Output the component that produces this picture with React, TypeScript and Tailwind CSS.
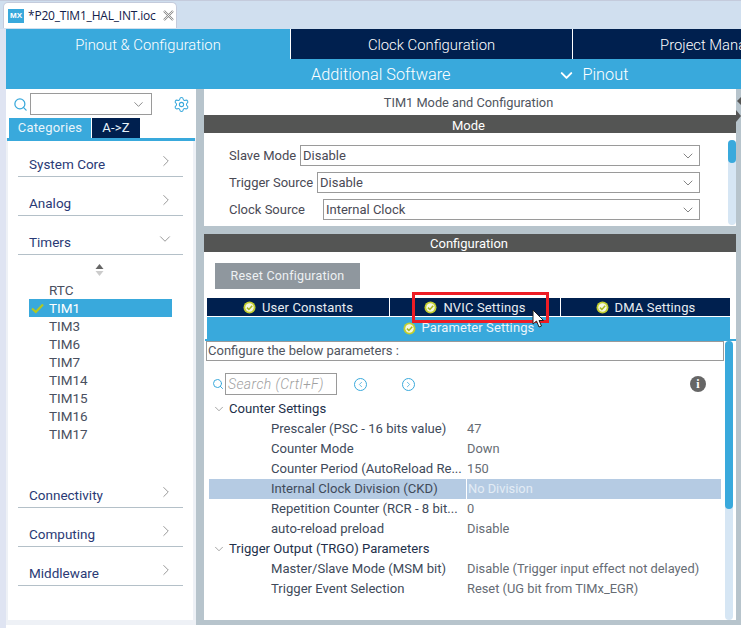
import { ChevronDown, ChevronLeft, ChevronRight, Search, Settings } from "lucide-react";

const timers = ["RTC", "TIM1", "TIM3", "TIM6", "TIM7", "TIM14", "TIM15", "TIM16", "TIM17"];

const counterRows = [
  { label: "Prescaler (PSC - 16 bits value)", value: "47" },
  { label: "Counter Mode", value: "Down" },
  { label: "Counter Period (AutoReload Re...", value: "150" },
  { label: "Internal Clock Division (CKD)", value: "No Division", selected: true },
  { label: "Repetition Counter (RCR - 8 bit...", value: "0" },
  { label: "auto-reload preload", value: "Disable" },
];

const triggerRows = [
  { label: "Master/Slave Mode (MSM bit)", value: "Disable (Trigger input effect not delayed)" },
  { label: "Trigger Event Selection", value: "Reset (UG bit from TIMx_EGR)" },
];

function OkDot() {
  return (
    <svg width="13" height="13" viewBox="0 0 13 13" className="shrink-0">
      <circle cx="6.5" cy="6.5" r="6" fill="#c3cf2f" />
      <circle cx="6.5" cy="6.5" r="4.2" fill="#f4f7e2" />
      <path d="M4 6.6 L5.9 8.5 L9.2 4.8" fill="none" stroke="#a8b81c" strokeWidth="1.5" />
    </svg>
  );
}

function Category({ name, open, className }: { name: string; open?: boolean; className?: string }) {
  return (
    <div className={`mx-[10px] h-[25px] flex items-start justify-between border-b border-[#b4c0c8] pl-[11px] pr-[8px] ${className ?? ""}`}>
      <span className="text-[13.5px] leading-[18px] text-[#2a3a75] mt-[3px]">{name}</span>
      {open ? (
        <ChevronDown size={18} strokeWidth={1} className="text-[#777] mr-[1px]" />
      ) : (
        <ChevronRight size={18} strokeWidth={1} className="text-[#777]" />
      )}
    </div>
  );
}

function ModeRow({ label, value, left }: { label: string; value: string; left: string }) {
  return (
    <div className="flex items-center h-[21px] mb-[6px] pl-[25px]">
      <span className="text-[13px] text-[#4a4a55] whitespace-nowrap pt-px">{label}</span>
      <div className={`absolute ${left} right-[36px] h-[21px] border border-[#9a9a9a] bg-white flex items-center justify-between pl-[2px] pr-[3px]`}>
        <span className="text-[13px] text-[#4a4a55] pt-px">{value}</span>
        <ChevronDown size={16} strokeWidth={1.2} className="text-[#666]" />
      </div>
    </div>
  );
}

function ParamTab({ label, className }: { label: string; className?: string }) {
  return (
    <div className={`h-[18px] bg-[#00204f] flex items-center justify-center gap-[6px] text-[13px] text-[#e8edf2] tracking-[0.15px] ${className ?? ""}`}>
      <OkDot />
      <span className="pt-px">{label}</span>
    </div>
  );
}

function TreeRow({ label, value, selected }: { label: string; value: string; selected?: boolean }) {
  return (
    <div className={`flex h-[20px] items-center ml-[5px] mr-[3px] ${selected ? "bg-[#b5cbe3]" : ""}`}>
      <span className="w-[257px] shrink-0 pl-[62px] text-[13.1px] text-[#404a5a] whitespace-nowrap">{label}</span>
      <span className={`h-full flex items-center pl-[1px] text-[12.85px] whitespace-nowrap ${selected ? "border-l border-white text-[#e3ecf5]" : "text-[#666c74]"}`}>{value}</span>
    </div>
  );
}

function TreeHead({ label }: { label: string }) {
  return (
    <div className="flex h-[20px] items-center pl-[8px]">
      <ChevronDown size={14} strokeWidth={1} className="text-[#666] mr-[3px]" />
      <span className="text-[13.1px] text-[#22304a] whitespace-nowrap">{label}</span>
    </div>
  );
}

export default function App() {
  return (
    <div className="relative w-[741px] h-[628px] overflow-hidden bg-[#dfe4f2] flex flex-col font-['Roboto',sans-serif]">
      {/* editor tab strip */}
      <div className="h-[29px] shrink-0 bg-[#d0dfef] border-t border-[#c4cbdc] pl-[3px] flex items-start">
        <div className="w-[174px] h-[26px] mt-px bg-white rounded-t-[5px] border border-b-0 border-[#c4cbdc] flex items-center pl-[4px]">
          <div className="w-[16px] h-[14px] bg-[#39a9dc] text-white text-[8px] font-bold flex items-center justify-center font-['Liberation_Sans',sans-serif]">MX</div>
          <span className="ml-[4px] text-[12px] tracking-[-0.2px] text-[#12204a] font-['Open_Sans',sans-serif] whitespace-nowrap">*P20_TIM1_HAL_INT.ioc</span>
          <svg width="11" height="11" viewBox="0 0 11 11" className="ml-[7px]">
            <path d="M1 1 L10 10 M10 1 L1 10" stroke="#8a8a8a" strokeWidth="2.2" />
            <path d="M1 1 L10 10 M10 1 L1 10" stroke="#fff" strokeWidth="0.8" />
          </svg>
        </div>
      </div>

      <div className="flex-1 ml-[6px] flex flex-col min-h-0">
        {/* perspective tabs */}
        <div className="h-[30px] shrink-0 flex bg-[#39a9dc] text-[14.8px] font-light text-white whitespace-nowrap">
          <div className="w-[284px] shrink-0 pt-[2px] flex items-center justify-center">Pinout &amp; Configuration</div>
          <div className="w-[282px] shrink-0 pt-[2px] bg-[#00204f] border-l border-white flex items-center justify-center">Clock Configuration</div>
          <div className="w-[282px] shrink-0 pt-[2px] bg-[#00204f] border-l border-white flex items-center justify-center">Project Manager</div>
        </div>
        <div className="h-[30px] shrink-0 pt-[2px] bg-[#39a9dc] flex items-center text-[16.3px] font-light text-white whitespace-nowrap">
          <span className="ml-[305px]">Additional Software</span>
          <ChevronDown size={19} strokeWidth={2.5} className="ml-[107px]" />
          <span className="ml-[6px]">Pinout</span>
        </div>

        <div className="flex-1 flex min-h-0">
          {/* left column */}
          <div className="w-[190px] shrink-0 flex flex-col bg-[#eef1f6]">
            <div className="h-[29px] shrink-0 flex items-center bg-white pl-[7px] pt-[1px]">
              <Search size={15} strokeWidth={2} className="text-[#39a9dc]" />
              <div className="ml-[2px] w-[122px] h-[22px] border border-[#9a9a9a] flex items-center justify-end pr-[5px]">
                <ChevronDown size={15} strokeWidth={1.2} className="text-[#666]" />
              </div>
              <Settings size={17} strokeWidth={1.5} className="ml-[21px] text-[#39a9dc]" />
            </div>
            <div className="flex h-[20px] shrink-0 bg-white pl-[3px] text-[13px] tracking-[0.2px] text-[#e8f4fa]">
              <div className="w-[82px] bg-[#39a9dc] flex items-center justify-center">Categories</div>
              <div className="ml-px w-[48px] bg-[#00204f] flex items-center justify-center">A-&gt;Z</div>
            </div>
            <div className="h-[3px] shrink-0 bg-[#39a9dc] ml-px mr-px" />
            <div className="flex-1 mb-[5px] ml-[2px] mr-[3px] bg-white pt-[11px] flex flex-col">
              <Category name="System Core" />
              <Category name="Analog" className="mt-[14px]" />
              <Category name="Timers" open className="mt-[14px]" />
              <div className="flex justify-center h-[14px] mt-[9px] pr-[3px]">
                <svg width="9" height="12" viewBox="0 0 9 12">
                  <path d="M4.5 0 L8.5 5 H0.5 Z" fill="#666" />
                  <path d="M4.5 12 L8.5 7 H0.5 Z" fill="#ccc" />
                </svg>
              </div>
              <div className="ml-[21px] w-[143px] mt-[3px]">
                {timers.map((t) => (
                  <div key={t} className={`relative h-[18px] pl-[20px] text-[13.5px] leading-[18px] ${t === "TIM1" ? "bg-[#39a9dc] text-white" : "text-[#4a5060]"}`}>
                    {t === "TIM1" && (
                      <svg width="13" height="11" viewBox="0 0 13 11" className="absolute left-[2px] top-[4px]">
                        <path d="M1 5.5 L4.8 9 L12 1.5" fill="none" stroke="#b5c81e" strokeWidth="2.2" />
                      </svg>
                    )}
                    {t}
                  </div>
                ))}
              </div>
              <Category name="Connectivity" className="mt-[40px]" />
              <Category name="Computing" className="mt-[14px]" />
              <Category name="Middleware" className="mt-[14px]" />
            </div>
          </div>

          {/* splitter */}
          <div className="w-[8px] shrink-0 bg-[#b7c4cc]" />

          {/* right column */}
          <div className="flex-1 min-w-0 flex flex-col bg-[#b7c4cc] pr-[5px] relative">
            <svg width="5" height="34" viewBox="0 0 5 34" className="absolute right-0 top-[3px]">
              <path d="M5 5 L1 9 L5 13 Z" fill="#555" />
              <path d="M0 18 L5 24 L0 30 Z" fill="#555" />
            </svg>
            <div className="h-[137px] shrink-0 relative bg-white flex flex-col">
              <div className="h-[28px] pt-px pl-[1px] flex items-center justify-center text-[12.8px] text-[#4f5560] pr-[4px]">TIM1 Mode and Configuration</div>
              <div className="h-[18px] pt-[3px] pr-[3px] bg-[#545554] text-[13px] text-white flex items-center justify-center">Mode</div>
              <div className="pt-[12px] relative">
                <ModeRow label="Slave Mode" value="Disable" left="left-[96px]" />
                <ModeRow label="Trigger Source" value="Disable" left="left-[113px]" />
                <ModeRow label="Clock Source" value="Internal Clock" left="left-[119px]" />
              </div>
              <div className="absolute right-0 top-[51px] bottom-[1px] w-[8px] bg-[#d6e6f4] rounded-[4px]">
                <div className="h-[23px] bg-[#39a9dc] rounded-[4px]" />
              </div>
            </div>
            <div className="h-[8px] shrink-0" />
            <div className="flex-1 min-h-0 mb-[5px] relative bg-white flex flex-col">
              <div className="h-[18px] shrink-0 pt-[2px] pr-[2px] bg-[#545554] text-[13px] text-white flex items-center justify-center">Configuration</div>
              <div className="h-[26px] w-[145px] shrink-0 mt-[11px] ml-[11px] bg-[#8f979e] text-[12.5px] tracking-[0.2px] text-[#eef1f3] flex items-center justify-center">Reset Configuration</div>
              <div className="shrink-0 mt-[9px] ml-[3px] mr-[6px] flex gap-px">
                <ParamTab label="User Constants" className="w-[182px]" />
                <ParamTab label="NVIC Settings" className="w-[170px]" />
                <ParamTab label="DMA Settings" className="flex-1" />
              </div>
              <div className="h-[22px] shrink-0 mt-px ml-[3px] mr-[6px] bg-[#39a9dc] flex items-center justify-center gap-[6px] text-[13px] text-[#e8f4fa] tracking-[0.1px]">
                <OkDot />
                <span>Parameter Settings</span>
              </div>
              <div className="h-[2px] shrink-0 ml-px bg-[#39a9dc]" />
              <div className="flex-1 min-h-0 relative pr-[12px]">
                <div className="h-[20px] ml-[2px] border border-[#9a9a9a] text-[13px] text-[#4f5560] flex items-center pl-px">Configure the below parameters :</div>
                <div className="flex items-center h-[22px] mt-[12px] pl-[8px]">
                  <Search size={12} strokeWidth={2} className="text-[#39a9dc]" />
                  <div className="ml-[1px] w-[112px] h-[22px] border border-[#9a9a9a] text-[14px] font-light tracking-[0.4px] italic text-[#a0a0a0] flex items-center pl-[2px]">Search (Crtl+F)</div>
                  <div className="ml-[17px] w-[13px] h-[13px] rounded-full border border-[#39a9dc] flex items-center justify-center">
                    <ChevronLeft size={9} strokeWidth={2} className="text-[#39a9dc]" />
                  </div>
                  <div className="ml-[35px] w-[13px] h-[13px] rounded-full border border-[#39a9dc] flex items-center justify-center">
                    <ChevronRight size={9} strokeWidth={2} className="text-[#39a9dc]" />
                  </div>
                  <div className="ml-[275px] w-[16px] h-[16px] rounded-full bg-[#666] text-white text-[12px] font-bold flex items-center justify-center font-['Liberation_Serif',serif]">i</div>
                </div>
                <div className="mt-[3px] pt-px">
                  <TreeHead label="Counter Settings" />
                  {counterRows.map((r) => (
                    <TreeRow key={r.label} {...r} />
                  ))}
                  <TreeHead label="Trigger Output (TRGO) Parameters" />
                  {triggerRows.map((r) => (
                    <TreeRow key={r.label} {...r} />
                  ))}
                </div>
                <div className="absolute right-[3px] top-0 bottom-0 w-[8px] bg-[#d6e6f4] rounded-[4px]">
                  <div className="h-[168px] bg-[#39a9dc] rounded-[4px]" />
                </div>
              </div>
            </div>
          </div>
        </div>
        <div className="h-[3px] shrink-0 bg-white" />
      </div>

      {/* annotation and pointer over the tabs */}
      <div className="absolute left-[412px] top-[292px] w-[137px] h-[31px] border-[3px] border-[#ed1c24]" />
      <svg width="13" height="20" viewBox="0 0 13 20" className="absolute left-[532px] top-[309px]">
        <path d="M1 1 V15 L4.5 12 L7 18 L9.5 17 L7 11.5 H11.5 Z" fill="#fff" stroke="#222" strokeWidth="1" />
      </svg>
    </div>
  );
}
